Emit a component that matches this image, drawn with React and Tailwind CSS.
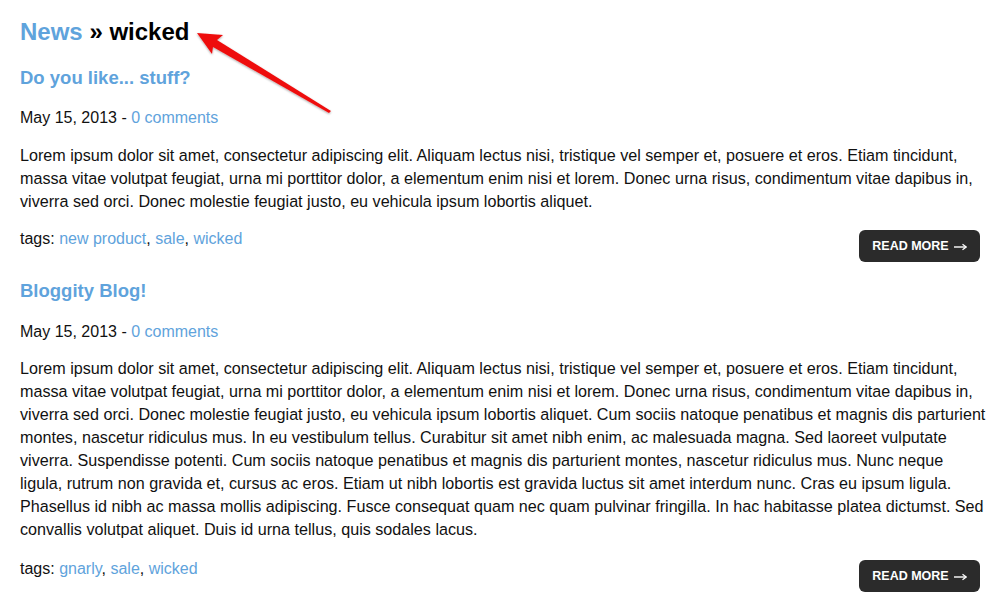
import React from 'react';

const posts = [
    {
        title: 'Do you like... stuff?',
        date: 'May 15, 2013',
        comments: '0 comments',
        body: 'Lorem ipsum dolor sit amet, consectetur adipiscing elit. Aliquam lectus nisi, tristique vel semper et, posuere et eros. Etiam tincidunt, massa vitae volutpat feugiat, urna mi porttitor dolor, a elementum enim nisi et lorem. Donec urna risus, condimentum vitae dapibus in, viverra sed orci. Donec molestie feugiat justo, eu vehicula ipsum lobortis aliquet.',
        tags: ['new product', 'sale', 'wicked'],
    },
    {
        title: 'Bloggity Blog!',
        date: 'May 15, 2013',
        comments: '0 comments',
        body: 'Lorem ipsum dolor sit amet, consectetur adipiscing elit. Aliquam lectus nisi, tristique vel semper et, posuere et eros. Etiam tincidunt, massa vitae volutpat feugiat, urna mi porttitor dolor, a elementum enim nisi et lorem. Donec urna risus, condimentum vitae dapibus in, viverra sed orci. Donec molestie feugiat justo, eu vehicula ipsum lobortis aliquet. Cum sociis natoque penatibus et magnis dis parturient montes, nascetur ridiculus mus. In eu vestibulum tellus. Curabitur sit amet nibh enim, ac malesuada magna. Sed laoreet vulputate viverra. Suspendisse potenti. Cum sociis natoque penatibus et magnis dis parturient montes, nascetur ridiculus mus. Nunc neque ligula, rutrum non gravida et, cursus ac eros. Etiam ut nibh lobortis est gravida luctus sit amet interdum nunc. Cras eu ipsum ligula. Phasellus id nibh ac massa mollis adipiscing. Fusce consequat quam nec quam pulvinar fringilla. In hac habitasse platea dictumst. Sed convallis volutpat aliquet. Duis id urna tellus, quis sodales lacus.',
        tags: ['gnarly', 'sale', 'wicked'],
    },
];

const Post = ({ post, first }) => (
    <div className={first ? 'mt-[20px]' : 'mt-[17px]'}>
        <h2 className="text-[18.5px] leading-[24px] font-bold text-[#5fa3dc]">{post.title}</h2>
        <p className={`${first ? 'mt-[16px]' : 'mt-[17px]'} text-[16px] leading-[23px]`}>
            {post.date} - <a className="text-[#5fa3dc]">{post.comments}</a>
        </p>
        <p className={`${first ? 'mt-[15px]' : 'mt-[14px]'} -mr-[6px] text-[16.15px] leading-[23px]`}>{post.body}</p>
        <div className={`${first ? 'mt-[14px]' : 'mt-[16px]'} flex items-start justify-between`}>
            <span className="text-[16px] leading-[23px]">
                tags:{' '}
                {post.tags.map((tag, i) => (
                    <React.Fragment key={tag}>
                        <a className="text-[#5fa3dc]">{tag}</a>
                        {i < post.tags.length - 1 ? ', ' : ''}
                    </React.Fragment>
                ))}
            </span>
            <button className="mt-[3px] flex h-[32px] w-[121px] items-center justify-center gap-[5px] rounded-[6px] bg-[#2b2b2b] text-[12.5px] font-bold text-white">
                READ MORE
                <svg width="13" height="8" viewBox="0 0 13 8" className="mt-[1px]">
                    <path d="M0 4H12" stroke="white" strokeWidth="1.4" />
                    <path d="M8.5 1.3L12.3 4L8.5 6.7" fill="none" stroke="white" strokeWidth="1.3" />
                </svg>
            </button>
        </div>
    </div>
);

export default function App() {
    return (
        <div className="relative min-h-[604px] bg-white pl-[20px] pr-[16px] pt-[18px] text-[#111] font-['Liberation_Sans',Arial,sans-serif]">
            <h1 className="text-[24px] leading-[28px] font-bold">
                <a className="text-[#5fa3dc]">News</a> <span className="text-black">» wicked</span>
            </h1>

            {posts.map((post, i) => (
                <Post key={post.title} post={post} first={i === 0} />
            ))}

            {/* red annotation arrow */}
            <svg className="absolute left-0 top-0 pointer-events-none" width="400" height="130" viewBox="0 0 400 130">
                <defs>
                    <filter id="sh" x="-20%" y="-20%" width="140%" height="140%">
                        <feDropShadow dx="0" dy="1" stdDeviation="1" floodColor="#000" floodOpacity="0.35" />
                    </filter>
                </defs>
                <polygon
                    filter="url(#sh)"
                    fill="#ee1111"
                    points="197,33 223,35 217,40 331,111 329,113 213,47 212,54"
                />
            </svg>
        </div>
    );
}
